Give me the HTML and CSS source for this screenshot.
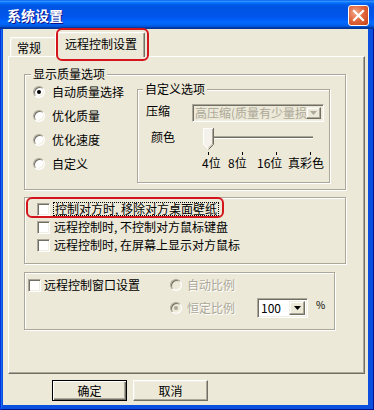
FILE: index.html
```html
<!DOCTYPE html>
<html lang="zh-CN">
<head>
<meta charset="utf-8">
<title>系统设置</title>
<link rel="stylesheet" href="styles.css">
</head>
<body>
<div class="window">
  <div class="titlebar">
    <span class="title">系统设置</span>
    <span class="close">
      <svg width="19" height="19" viewBox="0 0 19 19"><path d="M5 5 L14 14 M14 5 L5 14" stroke="#fff" stroke-width="2.2" stroke-linecap="square"/></svg>
    </span>
  </div>
  <div class="client">
    <div class="tabs">
      <div class="tab tab-inactive">常规</div>
      <div class="tab tab-active">远程控制设置</div>
      <span class="mark mark-tab"></span>
    </div>
    <div class="panel">
      <fieldset class="group quality">
        <legend>显示质量选项</legend>
        <div class="quality-body">
          <div class="radios">
            <label class="opt"><span class="radio checked"></span>自动质量选择</label>
            <label class="opt"><span class="radio"></span>优化质量</label>
            <label class="opt"><span class="radio"></span>优化速度</label>
            <label class="opt"><span class="radio"></span>自定义</label>
          </div>
          <fieldset class="group custom">
            <legend>自定义选项</legend>
            <div class="row-compress">
              <span class="lbl-compress">压缩</span>
              <div class="combo combo-disabled">
                <span class="combo-text">高压缩(质量有少量损</span>
                <span class="combo-btn"><svg width="7" height="4" viewBox="0 0 7 4"><path d="M0 0H7L3.5 4Z" fill="#ACA899"/></svg></span>
              </div>
            </div>
            <div class="row-color">
              <span class="lbl-color">颜色</span>
              <div class="slider">
                <svg width="130" height="28" viewBox="0 0 130 28">
                  <rect x="10" y="8" width="105" height="1" fill="#ACA899"/>
                  <rect x="10" y="9" width="105" height="1" fill="#716F64"/>
                  <rect x="10" y="10" width="105" height="1" fill="#fff"/>
                  <path d="M5 0H16V16L10.5 21.5L5 16Z" fill="#F4F2EA"/>
                  <path d="M5.5 16.5V0.5H15" stroke="#fff" fill="none"/>
                  <path d="M15.5 0V16.5L10.5 21.5" stroke="#716F64" fill="none"/>
                  <path d="M14.5 1V16L10.5 20" stroke="#ACA899" fill="none"/>
                  <path d="M5.5 16.5L10 21" stroke="#fff" fill="none"/>
                  <rect x="10" y="24" width="1" height="3" fill="#000"/>
                  <rect x="44" y="24" width="1" height="3" fill="#000"/>
                  <rect x="78" y="24" width="1" height="3" fill="#000"/>
                  <rect x="112" y="24" width="1" height="3" fill="#000"/>
                </svg>
                <div class="ticklabels">
                  <span class="t1">4位</span><span class="t2">8位</span><span class="t3">16位</span><span>真彩色</span>
                </div>
              </div>
            </div>
          </fieldset>
        </div>
      </fieldset>

      <div class="group checks">
        <label class="opt"><span class="check"></span><span class="focus">控制对方时, 移除对方桌面壁纸</span></label>
        <label class="opt"><span class="check"></span>远程控制时, 不控制对方鼠标键盘</label>
        <label class="opt"><span class="check"></span>远程控制时, 在屏幕上显示对方鼠标</label>
        <span class="mark mark-check"></span>
      </div>

      <div class="group winset">
        <div class="win-grid">
          <label class="opt opt-win"><span class="check"></span>远程控制窗口设置</label>
          <label class="opt disabled"><span class="radio radio-disabled"></span>自动比例</label>
          <div class="row2">
            <label class="opt disabled"><span class="radio radio-disabled checked-gray"></span><span class="ratio-lbl">恒定比例</span></label>
            <div class="combo combo-small">
              <span class="combo-text">100</span>
              <span class="combo-btn"><svg width="7" height="4" viewBox="0 0 7 4"><path d="M0 0H7L3.5 4Z" fill="#000"/></svg></span>
            </div>
            <span class="pct">%</span>
          </div>
        </div>
      </div>
    </div>
    <div class="buttons">
      <button class="btn btn-default">确定</button>
      <button class="btn">取消</button>
    </div>
  </div>
</div>
</body>
</html>
```
FILE: styles.css
```css
* { box-sizing: border-box; }
body {
  margin: 0;
  font-family: "Noto Sans CJK SC", "Noto Sans", sans-serif;
  font-size: 12px;
  color: #000;
  background: #fff;
}
.window {
  width: 374px;
  height: 410px;
  display: flex;
  flex-direction: column;
  background: #0A4FDE;
  box-shadow: inset 1px 0 #0831D9, inset -1px -1px #00138C, inset 2px 0 #166AEE;
}
.titlebar {
  height: 29px;
  flex: none;
  display: flex;
  justify-content: space-between;
  align-items: flex-start;
  padding: 0 5px 0 7px;
  background: linear-gradient(to bottom, #0058EE 0%, #3593FF 4%, #288EFF 6%, #127DFF 8%, #036FFC 10%, #0262EE 14%, #0057E5 20%, #0054E3 24%, #0055EB 56%, #005BF5 66%, #026AFE 76%, #0062EF 86%, #0052D6 92%, #0040AB 94%, #003092 100%);
}
.title {
  color: #fff;
  font-weight: bold;
  font-size: 14px;
  line-height: 16px;
  margin-top: 7px;
  text-shadow: 1px 1px #0F1089;
}
.close {
  width: 21px;
  height: 21px;
  margin-top: 5px;
  border: 1px solid #fff;
  border-radius: 3px;
  background: radial-gradient(circle at 35% 35%, #F0A88E 0%, #E2693F 45%, #C73D14 100%);
  display: flex;
  align-items: center;
  justify-content: center;
}
.close svg { display: block; }
.client {
  flex: 1;
  margin: 0 6px 5px 3px;
  background: #ECE9D8;
  padding: 3px 0 0 5px;
  display: flex;
  flex-direction: column;
}
/* tabs */
.tabs {
  height: 24px;
  flex: none;
  display: flex;
  align-items: flex-end;
  padding-left: 2px;
  position: relative;
  z-index: 1;
}
.tab {
  display: flex;
  align-items: center;
  border: 1px solid;
  border-color: #fff #716F64 transparent #fff;
  border-bottom: none;
  border-radius: 2px 2px 0 0;
  box-shadow: inset -1px 0 #ACA899, inset 1px 1px #F1EFE2;
  background: #ECE9D8;
  line-height: 14px;
}
.tab-inactive {
  width: 47px;
  height: 19px;
  padding-left: 6px;
  padding-top: 1px;
}
.tab-active {
  width: 90px;
  height: 25px;
  margin-left: -2px;
  margin-bottom: -1px;
  padding-left: 9px;
  padding-bottom: 2px;
  position: relative;
}
.mark {
  position: absolute;
  border: 2px solid #D4161C;
  border-radius: 6px;
  pointer-events: none;
}
.mark-tab {
  left: 48px;
  top: -4px;
  width: 93px;
  height: 33px;
}
/* panel */
.panel {
  width: 357px;
  height: 318px;
  flex: none;
  border: 1px solid;
  border-color: #fff #716F64 #716F64 #fff;
  box-shadow: inset -1px -1px #ACA899;
  padding: 10px 0 0 15px;
}
.group {
  border: 1px solid #ACA899;
  box-shadow: 1px 1px 0 #fff, inset 1px 1px 0 #fff;
  margin: 0;
  padding: 0;
  min-width: 0;
}
.group legend {
  padding: 0 2px;
  margin-left: 6px;
  line-height: 14px;
  background: #ECE9D8;
}
.quality {
  width: 322px;
  height: 123px;
}
.quality-body {
  display: flex;
  align-items: flex-start;
}
.radios {
  width: 112px;
  flex: none;
  padding: 4px 0 0 8px;
  display: flex;
  flex-direction: column;
  gap: 10px;
}
.opt {
  display: flex;
  align-items: center;
  gap: 7px;
  height: 14px;
  line-height: 14px;
  white-space: nowrap;
}
.radio {
  width: 12px;
  height: 12px;
  flex: none;
  border-radius: 50%;
  background: #fff;
  border: 1px solid;
  border-color: #ACA899 #fff #fff #ACA899;
  box-shadow: inset 1px 1px #716F64, inset -1px -1px #F1EFE2;
  position: relative;
}
.radio.checked::after, .radio.checked-gray::after {
  content: "";
  position: absolute;
  left: 3px;
  top: 3px;
  width: 4px;
  height: 4px;
  border-radius: 50%;
  background: #000;
}
.radio.checked-gray::after { background: #ACA899; }
.radio-disabled { background: #ECE9D8; }
.custom {
  width: 193px;
  height: 101px;
  margin-top: 1px;
}
.custom legend { margin-left: 5px; }
.row-compress {
  display: flex;
  margin-top: 8px;
  height: 18px;
}
.lbl-compress {
  width: 54px;
  padding-left: 8px;
  line-height: 14px;
}
.combo {
  display: flex;
  align-items: center;
  border: 1px solid;
  border-color: #ACA899 #fff #fff #ACA899;
  box-shadow: inset 1px 1px #716F64, inset -1px -1px #F1EFE2;
  padding: 2px 2px 2px 3px;
  background: #fff;
}
.combo-disabled {
  width: 132px;
  height: 18px;
  padding-left: 2px;
  background: #ECE9D8;
  color: #ACA899;
}
.combo-text {
  flex: 1;
  min-width: 0;
  white-space: nowrap;
  line-height: 14px;
}
.combo-btn {
  width: 15px;
  align-self: stretch;
  flex: none;
  display: flex;
  align-items: center;
  justify-content: center;
  background: #ECE9D8;
  border: 1px solid;
  border-color: #F1EFE2 #716F64 #716F64 #F1EFE2;
  box-shadow: inset -1px -1px #ACA899, inset 1px 1px #fff;
  position: relative;
}
.combo-btn svg { display: block; }
.row-color {
  display: flex;
  margin-top: 6px;
}
.lbl-color {
  width: 60px;
  padding: 2px 0 0 13px;
  line-height: 14px;
}
.slider svg { display: block; }
.slider { width: 130px; }
.ticklabels {
  display: flex;
  margin-left: 4px;
  line-height: 14px;
  white-space: nowrap;
}
.t1 { width: 26px; }
.t2 { width: 29px; }
.t3 { width: 31px; }
/* checks */
.checks {
  width: 322px;
  height: 67px;
  margin-top: 7px;
  padding: 4px 0 0 12px;
  display: flex;
  flex-direction: column;
  gap: 4px;
  position: relative;
}
.check {
  width: 13px;
  height: 13px;
  flex: none;
  background: #fff;
  border: 1px solid;
  border-color: #ACA899 #fff #fff #ACA899;
  box-shadow: inset 1px 1px #716F64, inset -1px -1px #F1EFE2;
}
.checks .opt { gap: 4px; }
.focus {
  outline: 1px dotted #000;
  padding: 0 1px;
  line-height: 12px;
}
.mark-check {
  left: 1px;
  top: -1px;
  width: 198px;
  height: 21px;
}
/* window setting group */
.winset {
  width: 311px;
  height: 58px;
  margin-top: 8px;
}
.win-grid {
  display: grid;
  grid-template-columns: 142px auto;
  row-gap: 6px;
  padding: 5px 0 0 3px;
}
.opt-win { gap: 3px; }
.disabled {
  color: #ACA899;
  text-shadow: 1px 1px #fff;
  gap: 5px;
}
.row2 {
  grid-column: 2;
  display: flex;
  align-items: center;
  height: 20px;
}
.ratio-lbl { width: 70px; }
.combo-small {
  width: 51px;
  height: 20px;
  padding-left: 3px;
}
.combo-small .combo-btn { width: 16px; }
.pct {
  align-self: flex-start;
  font-size: 10px;
  line-height: 12px;
  margin: 1px 0 0 8px;
}
/* buttons */
.buttons {
  display: flex;
  gap: 6px;
  padding-left: 44px;
  margin-top: 6px;
}
.btn {
  width: 75px;
  height: 21px;
  padding: 0;
  margin: 0;
  font-family: inherit;
  font-size: 12px;
  line-height: 14px;
  color: #000;
  background: #ECE9D8;
  border: 1px solid;
  border-color: #fff #716F64 #716F64 #fff;
  box-shadow: inset -1px -1px #ACA899, inset 1px 1px #F1EFE2;
}
.btn-default {
  border: 1px solid #000;
  box-shadow: inset 1px 1px #fff, inset -1px -1px #716F64, inset -2px -2px #ACA899;
}
```
